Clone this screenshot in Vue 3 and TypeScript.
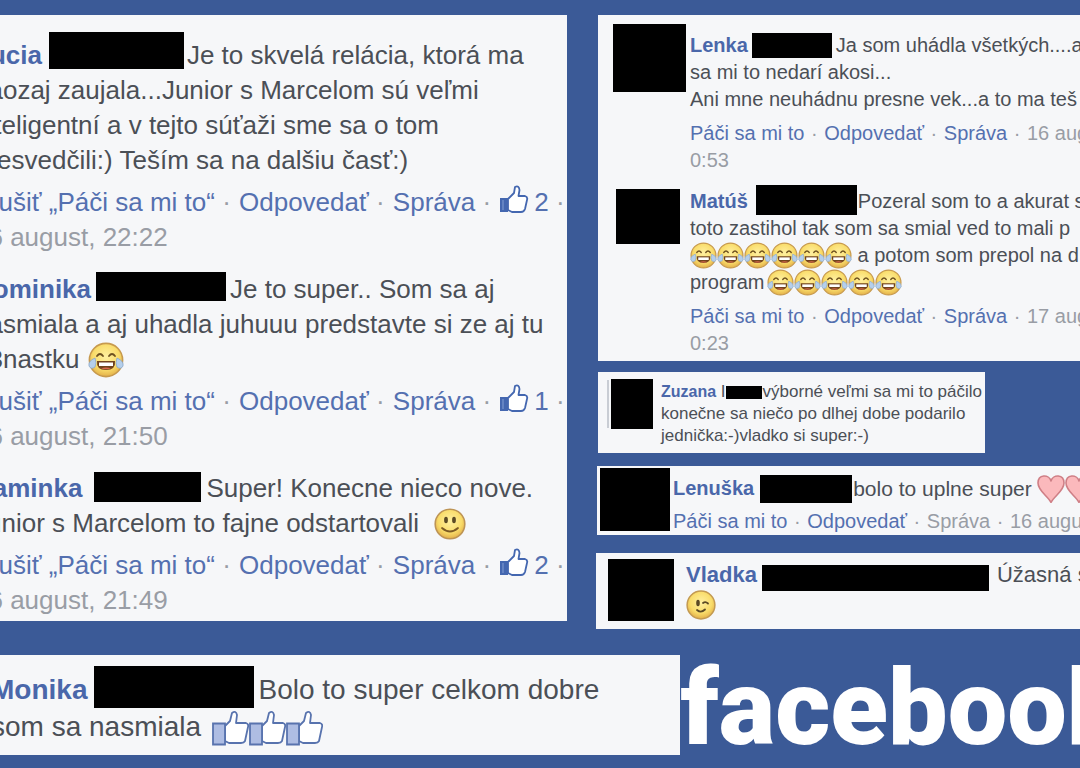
<script setup lang="ts">
type IconName = 'joy' | 'smile' | 'wink' | 'heart' | 'like' | 'thumb'

interface Token {
  kind: 'text' | 'name' | 'box' | 'icon' | 'link' | 'muted' | 'dot'
  text?: string
  icon?: IconName
  w?: number
  h?: number
  before?: number
  after?: number
  lift?: number
}

interface Comment {
  avatar?: { w: number; h: number; left: number; top: number }
  body: Token[][]
  actions: Token[][]
}

const text = (value: string): Token => ({ kind: 'text', text: value })
const name = (value: string): Token => ({ kind: 'name', text: value })
const link = (value: string): Token => ({ kind: 'link', text: value })
const muted = (value: string): Token => ({ kind: 'muted', text: value })
const dot = (): Token => ({ kind: 'dot', text: ' · ' })
const box = (w: number, h: number, before: number, after: number, lift = 0): Token => ({
  kind: 'box', w, h, before, after, lift,
})
const icon = (value: IconName, w: number, h: number, before = 0, after = 0, lift = 0): Token => ({
  kind: 'icon', icon: value, w, h, before, after, lift,
})
const repeat = (count: number, make: () => Token): Token[] => Array.from({ length: count }, make)

const joy = () => icon('joy', 27, 27)

function likedActions(count: string, date: string): Token[][] {
  return [
    [link('Zrušiť „Páči sa mi to“'), dot(), link('Odpovedať'), dot(), link('Správa'), dot(),
      icon('like', 30, 28, 0, 5, 7), link(count), dot()],
    [muted(date)],
  ]
}

function plainActions(day: string, time: string): Token[][] {
  return [
    [link('Páči sa mi to'), dot(), link('Odpovedať'), dot(), link('Správa'), dot(), muted(`${day} august,`)],
    [muted(time)],
  ]
}

const mainThread: Comment[] = [
  {
    body: [
      [name('Lucia'), box(135, 37, 7, 3, 10), text('Je to skvelá relácia, ktorá ma')],
      [text('naozaj zaujala...Junior s Marcelom sú veľmi')],
      [text('inteligentní a v tejto súťaži sme sa o tom')],
      [text('presvedčili:) Teším sa na dalšiu časť:)')],
    ],
    actions: likedActions('2', '16 august, 22:22'),
  },
  {
    body: [
      [name('Dominika'), box(130, 29, 5, 4, 6), text('Je to super.. Som sa aj')],
      [text('nasmiala a aj uhadla juhuuu predstavte si ze aj tu')],
      [text('13nastku '), icon('joy', 36, 36, 1)],
    ],
    actions: likedActions('1', '16 august, 21:50'),
  },
  {
    body: [
      [name('Kaminka'), box(107, 30, 12, 5, 3), text('Super! Konecne nieco nove.')],
      [text('Junior s Marcelom to fajne odstartovali '), icon('smile', 32, 32, 8)],
    ],
    actions: likedActions('2', '16 august, 21:49'),
  },
]

const sideThread: Comment[] = [
  {
    avatar: { w: 73, h: 68, left: 15, top: -8 },
    body: [
      [name('Lenka'), box(80, 25, 4, 4), text('Ja som uhádla všetkých....a')],
      [text('sa mi to nedarí akosi...')],
      [text('Ani mne neuhádnu presne vek...a to ma teš')],
    ],
    actions: plainActions('16', '0:53'),
  },
  {
    avatar: { w: 64, h: 55, left: 18, top: 1 },
    body: [
      [name('Matúš'), box(101, 30, 8, 1, 3), text('Pozeral som to a akurat s')],
      [text('toto zastihol tak som sa smial ved to mali p')],
      [...repeat(6, joy), text(' a potom som prepol na d')],
      [text('program'), icon('joy', 27, 27, 3), ...repeat(4, joy)],
    ],
    actions: plainActions('17', '0:23'),
  },
]

const zuzana: Comment[] = [
  {
    avatar: { w: 42, h: 50, left: 13, top: -2 },
    body: [
      [name('Zuzana'), text(' I'), box(36, 13, 0, 1), text('výborné veľmi sa mi to páčilo')],
      [text('konečne sa niečo po dlhej dobe podarilo')],
      [text('jednička:-)vladko si super:-)')],
    ],
    actions: [],
  },
]

const lenuska: Comment[] = [
  {
    avatar: { w: 70, h: 63, left: 3, top: -7 },
    body: [
      [name('Lenuška'), box(92, 28, 6, 1), text('bolo to uplne super'),
        icon('heart', 28, 28, 5), icon('heart', 28, 28)],
    ],
    actions: [
      [link('Páči sa mi to'), dot(), link('Odpovedať'), dot(), muted('Správa'), dot(), muted('16 august')],
    ],
  },
]

const vladka: Comment[] = [
  {
    avatar: { w: 66, h: 62, left: 12, top: -1 },
    body: [
      [name('Vladka'), box(227, 26, 5, 8, -6), text('Úžasná s')],
      [icon('wink', 30, 30)],
    ],
    actions: [],
  },
]

const monika: Comment[] = [
  {
    body: [
      [name('Monika'), box(160, 42, 7, 4, 5), text('Bolo to super celkom dobre')],
      [text('som sa nasmiala '), icon('thumb', 37, 36, 3, 0, -3), ...repeat(2, () => icon('thumb', 37, 36, 0, 0, -3))],
    ],
    actions: [],
  },
]

const leftPanels = [{ id: 'main', comments: mainThread }]
const rightPanels = [
  { id: 'side', comments: sideThread },
  { id: 'zuzana', comments: zuzana },
  { id: 'lenuska', comments: lenuska },
  { id: 'vladka', comments: vladka },
]
const bottomPanels = [{ id: 'monika', comments: monika }]

const groups = [
  { id: 'left', panels: leftPanels },
  { id: 'right', panels: rightPanels },
  { id: 'bottom', panels: bottomPanels },
]

function tokenStyle(token: Token) {
  const lift = token.lift ?? 0
  return {
    width: `${token.w}px`,
    height: `${token.h}px`,
    marginLeft: `${token.before ?? 0}px`,
    marginRight: `${token.after ?? 0}px`,
    marginBottom: `${Math.max(lift, 0)}px`,
    marginTop: `${Math.max(-lift, 0)}px`,
  }
}

function avatarStyle(avatar: { w: number; h: number; left: number; top: number }) {
  return {
    width: `${avatar.w}px`,
    height: `${avatar.h}px`,
    marginLeft: `${avatar.left}px`,
    marginTop: `${avatar.top}px`,
  }
}
</script>

<template>
  <main class="page">
    <svg class="symbols" aria-hidden="true">
      <defs>
        <radialGradient id="face" cx="50%" cy="40%" r="60%">
          <stop offset="0" stop-color="#fff0a0" />
          <stop offset="0.65" stop-color="#f9dc6a" />
          <stop offset="1" stop-color="#e3b04a" />
        </radialGradient>
        <symbol id="joy" viewBox="0 0 36 36">
          <circle cx="18" cy="18" r="16.6" fill="url(#face)" stroke="#c79a4e" stroke-width="1.6" />
          <path d="M9 14 Q12 10 15 14 M21 14 Q24 10 27 14" fill="none" stroke="#6d501f" stroke-width="1.8" stroke-linecap="round" />
          <path d="M9 19 H27 Q28 28 18 28 Q8 28 9 19Z" fill="#71431c" />
          <path d="M11 20.5 H25 V24 H11Z" fill="#fff" />
          <path d="M13 26.5 Q18 24.5 23 26.5 Q18 28 13 26.5Z" fill="#d8674a" />
          <path d="M7 16 Q0 19 1 24 Q3 28 7 25 Q9 21 7 16Z M29 16 Q36 19 35 24 Q33 28 29 25 Q27 21 29 16Z" fill="#b5cfeb" stroke="#8aa7c9" stroke-width="0.8" />
        </symbol>
        <symbol id="smile" viewBox="0 0 32 32">
          <circle cx="16" cy="16" r="14.8" fill="url(#face)" stroke="#bd9455" stroke-width="1.6" />
          <ellipse cx="12" cy="12" rx="1.9" ry="3.3" fill="#5b4a25" />
          <ellipse cx="20" cy="12" rx="1.9" ry="3.3" fill="#5b4a25" />
          <path d="M8 20 Q16 27 24 20" fill="none" stroke="#7c5a24" stroke-width="1.8" stroke-linecap="round" />
        </symbol>
        <symbol id="wink" viewBox="0 0 30 30">
          <circle cx="15" cy="15" r="13.9" fill="url(#face)" stroke="#c39a52" stroke-width="1.5" />
          <ellipse cx="12" cy="13" rx="1.8" ry="3.3" fill="#5b4a25" />
          <path d="M17 13 Q19.5 11 22 13.5 M11 20 Q15 23.5 19 19.5" fill="none" stroke="#5b4a25" stroke-width="1.8" stroke-linecap="round" />
        </symbol>
        <symbol id="heart" viewBox="0 0 28 28">
          <path d="M14 27.5 C11 21 1 16 1 8 C1 -1 12 -1 14 6 C16 -1 27 -1 27 8 C27 16 17 21 14 27.5Z" fill="#fbb9bc" stroke="#cf7f86" stroke-width="1.6" stroke-linejoin="round" />
        </symbol>
        <symbol id="like" viewBox="0 0 30 28">
          <path d="M9 14 L15 8 L16 2 Q20 0 20.5 5 L19.5 11 H26 Q29 12 28 15 L26 24 Q25 27 22 27 H13 L9 25Z" fill="#fff" stroke="#4467b0" stroke-width="1.8" stroke-linejoin="round" />
          <path d="M1 13 H9 V27 H1Z" fill="#4467b0" />
          <path d="M4 15 V25" stroke="#6f8cc8" stroke-width="1.5" />
        </symbol>
        <symbol id="thumb" viewBox="0 0 37 36">
          <path d="M13 16 L18 11 L20 3 Q24 0 25 5 L24 13 H34 Q37 14 36 17 L33 31 Q32 33 29 33 H17 L13 31Z" fill="#fff" stroke="#5873ae" stroke-width="1.8" stroke-linejoin="round" />
          <path d="M1 13.5 H13 V34.5 H1Z" fill="#aebde3" stroke="#5873ae" stroke-width="1.8" />
        </symbol>
      </defs>
    </svg>

    <div v-for="group in groups" :key="group.id" class="group" :class="`group-${group.id}`">
      <section v-for="panel in group.panels" :key="panel.id" class="panel" :class="`panel-${panel.id}`">
        <article v-for="(comment, c) in panel.comments" :key="c" class="comment">
          <div v-if="comment.avatar" class="avatar-column">
            <div class="avatar" :style="avatarStyle(comment.avatar)"></div>
          </div>
          <div class="content">
            <div
              v-for="(part, p) in [comment.body, comment.actions]"
              :key="p"
              :class="p === 0 ? 'body' : 'actions'"
            >
              <div v-for="(line, l) in part" :key="l" class="line">
                <template v-for="(token, t) in line" :key="t">
                  <span v-if="token.kind === 'box'" class="redacted" :style="tokenStyle(token)"></span>
                  <svg v-else-if="token.kind === 'icon'" class="icon" :style="tokenStyle(token)" aria-hidden="true">
                    <use :href="`#${token.icon}`" />
                  </svg>
                  <a v-else-if="token.kind === 'name'" class="name" href="#">{{ token.text }}</a>
                  <a v-else-if="token.kind === 'link'" class="link" href="#">{{ token.text }}</a>
                  <span v-else :class="token.kind">{{ token.text }}</span>
                </template>
              </div>
            </div>
          </div>
        </article>
      </section>
      <div v-if="group.id === 'bottom'" class="logo">facebook</div>
    </div>
  </main>
</template>

<style>
body {
  margin: 0;
  background: #3b5a97;
}
</style>

<style scoped>
.page {
  box-sizing: border-box;
  display: grid;
  grid-template-columns: 52.5% minmax(0, 1fr);
  column-gap: 29px;
  row-gap: 26px;
  align-items: start;
  align-content: start;
  min-height: 100vh;
  padding-top: 15px;
  overflow: hidden;
  background: #3b5a97;
  color: #4b4f56;
  font-family: "Liberation Sans", Arial, sans-serif;
}

.symbols {
  position: absolute;
  width: 0;
  height: 0;
}

.group {
  min-width: 0;
}

.group-right {
  display: flex;
  flex-direction: column;
}

.group-bottom {
  grid-column: 1 / -1;
  display: flex;
  align-items: flex-start;
  overflow: hidden;
}

.panel {
  overflow: hidden;
  background: #f6f7f9;
}

.comment {
  display: flex;
  align-items: flex-start;
}

.line {
  display: flex;
  align-items: center;
  white-space: pre;
}

.line > * {
  flex: none;
}

.panel-main {
  padding: 23px 0 3px;
  font-size: 26px;
}

.panel-main .line {
  height: 35px;
  line-height: 35px;
}

.panel-main .comment + .comment {
  margin-top: 17px;
}

.panel-main .content {
  margin-left: -26px;
}

.panel-main .actions,
.panel-side .actions {
  margin-top: 7px;
}

.panel-side {
  margin-left: 2px;
  padding: 17px 0 4px;
  font-size: 20px;
}

.panel-side .line,
.panel-lenuska .line {
  height: 27px;
  line-height: 27px;
}

.panel-side .comment + .comment {
  margin-top: 14px;
}

.panel-side .avatar-column {
  flex: 0 0 92px;
}

.avatar-column {
  height: 0;
}

.panel-zuzana {
  align-self: flex-start;
  box-sizing: border-box;
  width: 80%;
  margin: 11px 0 0 2px;
  padding: 9px 0 6px;
  font-size: 17px;
}

.panel-zuzana .avatar-column {
  flex: 0 0 63px;
}

.panel-zuzana .avatar {
  box-shadow: -3px 0 0 -1px #f6f7f9, -5px 0 0 -1px #c9cdd4;
}

.panel-zuzana .name {
  font-size: 16px;
}

.panel-zuzana .line {
  height: 22px;
  line-height: 22px;
}

.panel-lenuska {
  margin: 13px 0 0 1px;
  padding: 9px 0 0;
  font-size: 20px;
}

.panel-lenuska .avatar-column {
  flex: 0 0 76px;
}

.panel-lenuska .text {
  font-size: 21px;
}

.panel-lenuska .actions {
  margin-top: 6px;
}

.panel-vladka {
  margin-top: 18px;
  padding: 7px 0 9px;
  font-size: 22px;
}

.panel-vladka .avatar-column {
  flex: 0 0 90px;
}

.panel-vladka .line {
  height: 30px;
  line-height: 30px;
}

.panel-monika {
  flex: 0 0 63%;
  box-sizing: border-box;
  padding: 16px 0 10px;
  font-size: 28px;
}

.panel-monika .content {
  margin-left: -9px;
}

.panel-monika .line {
  height: 37px;
  line-height: 37px;
}

.avatar,
.redacted {
  background: #000;
}

.icon {
  display: block;
  overflow: visible;
}

.name {
  color: #4a67aa;
  font-weight: 700;
  text-decoration: none;
}

.link {
  color: #5470b0;
  text-decoration: none;
}

.muted,
.dot {
  color: #999da5;
}

.dot {
  margin: 0 1px;
}

.panel-main .dot {
  margin: 0 1px 0 0;
}

.logo {
  color: #fff;
  font-family: Roboto, "Liberation Sans", sans-serif;
  font-size: 106px;
  font-weight: 900;
  line-height: 106px;
}
</style>
